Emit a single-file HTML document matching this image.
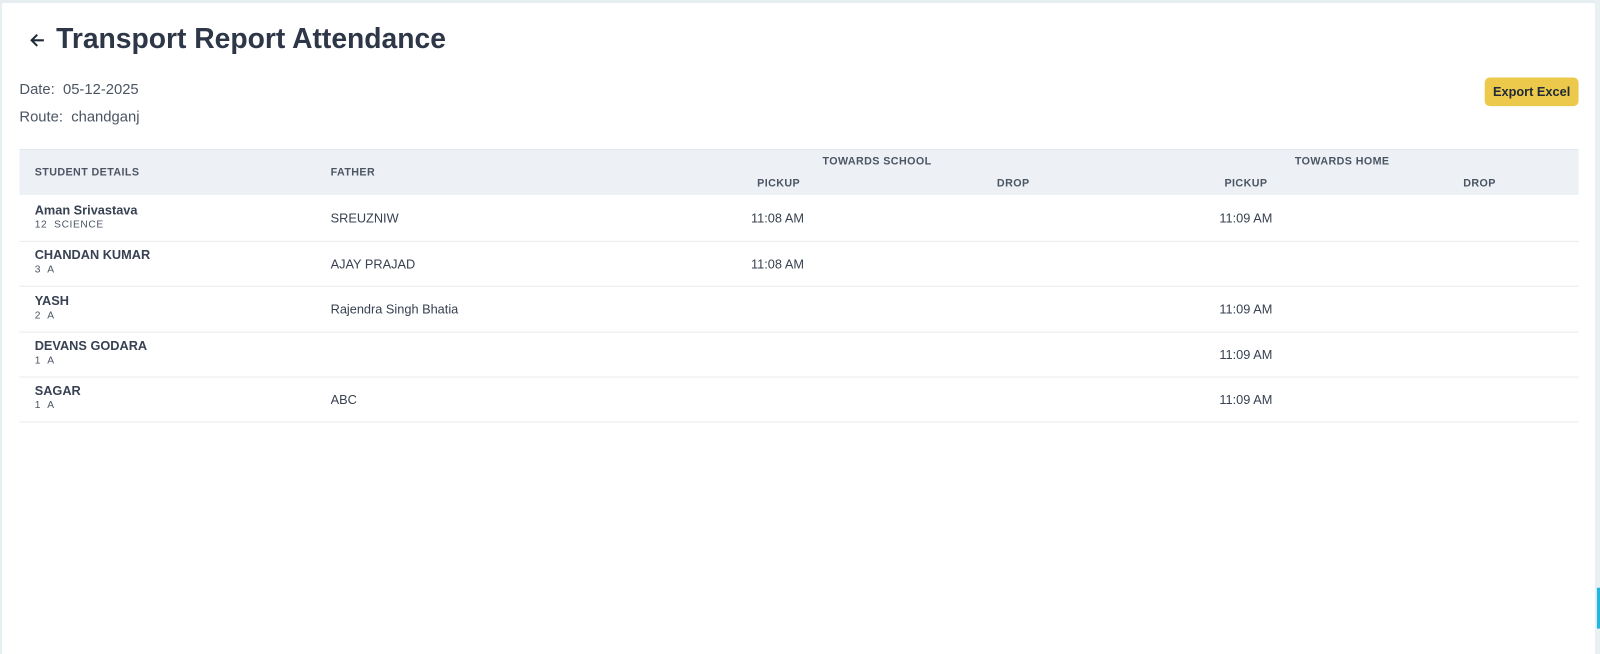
<!DOCTYPE html>
<html><head><meta charset="utf-8"><style>
*{margin:0;padding:0;box-sizing:border-box}
body{width:1600px;height:641px;background:#fff;font-family:"Liberation Sans",sans-serif;color:#374151;position:relative;overflow:hidden}
#w{position:absolute;left:0;top:0;width:1568px;height:628px;transform:scale(1.0204);transform-origin:0 0}
.a{position:absolute;white-space:nowrap}
.h{font-size:10.5px;font-weight:bold;color:#4b5563;letter-spacing:.4px}
.c{font-size:12.5px;color:#374151}
.n{font-size:12.5px;font-weight:bold;color:#374151}
.s{font-size:10px;color:#4b5563;letter-spacing:.6px}
.line{position:absolute;left:19px;width:1528px;height:1px;background:#e8ebef}
</style></head><body>
<div id="w">
<div class="a" style="left:0;top:0;width:1568px;height:3px;background:#e6eef2"></div>
<div class="a" style="left:0;top:0;width:2px;height:641px;background:#e6eef2"></div>
<div class="a" style="left:1563px;top:0;width:5px;height:641px;background:#e9f0f2"></div>
<div class="a" style="left:1565px;top:576px;width:3px;height:40px;background:#1fb6e0"></div>

<svg class="a" style="left:28px;top:31px" width="17" height="17" viewBox="0 0 17 17"><path d="M15 8.5H3M8.5 3L3 8.5L8.5 14" stroke="#1f2937" stroke-width="2" fill="none"/></svg>
<div class="a" style="left:55px;top:22px;font-size:27.7px;font-weight:bold;color:#2d3748">Transport Report Attendance</div>
<div class="a" style="left:19px;top:80px;font-size:14.5px;color:#4b5563">Date:&nbsp; 05-12-2025</div>
<div class="a" style="left:19px;top:107px;font-size:14.5px;color:#4b5563">Route:&nbsp; chandganj</div>
<div class="a" style="left:1455px;top:76px;width:92px;height:28px;background:#ecc94b;border-radius:5px;font-size:12.5px;font-weight:bold;color:#1f2937;text-align:center;line-height:28px">Export Excel</div>

<div class="a" style="left:19px;top:146px;width:1528px;height:45px;background:#edf1f5;border-top:1px solid #e2e8f0"></div>
<div class="a h" style="left:34px;top:163px">STUDENT DETAILS</div>
<div class="a h" style="left:324px;top:163px">FATHER</div>
<div class="a h" style="left:806px;top:152px">TOWARDS SCHOOL</div>
<div class="a h" style="left:742px;top:174px">PICKUP</div>
<div class="a h" style="left:977px;top:174px">DROP</div>
<div class="a h" style="left:1269px;top:152px">TOWARDS HOME</div>
<div class="a h" style="left:1200px;top:174px">PICKUP</div>
<div class="a h" style="left:1434px;top:174px">DROP</div>

<div class="a n" style="left:34px;top:199px">Aman Srivastava</div><div class="a s" style="left:34px;top:215px">12&nbsp; SCIENCE</div>
<div class="a c" style="left:324px;top:207px">SREUZNIW</div>
<div class="a c" style="left:736px;top:207px">11:08 AM</div>
<div class="a c" style="left:1195px;top:207px">11:09 AM</div>
<div class="line" style="top:236px"></div>

<div class="a n" style="left:34px;top:243px">CHANDAN KUMAR</div><div class="a s" style="left:34px;top:259px">3&nbsp; A</div>
<div class="a c" style="left:324px;top:252px">AJAY PRAJAD</div>
<div class="a c" style="left:736px;top:252px">11:08 AM</div>
<div class="line" style="top:280px"></div>

<div class="a n" style="left:34px;top:288px">YASH</div><div class="a s" style="left:34px;top:304px">2&nbsp; A</div>
<div class="a c" style="left:324px;top:296px">Rajendra Singh Bhatia</div>
<div class="a c" style="left:1195px;top:296px">11:09 AM</div>
<div class="line" style="top:325px"></div>

<div class="a n" style="left:34px;top:332px">DEVANS GODARA</div><div class="a s" style="left:34px;top:348px">1&nbsp; A</div>
<div class="a c" style="left:1195px;top:341px">11:09 AM</div>
<div class="line" style="top:369px"></div>

<div class="a n" style="left:34px;top:376px">SAGAR</div><div class="a s" style="left:34px;top:392px">1&nbsp; A</div>
<div class="a c" style="left:324px;top:385px">ABC</div>
<div class="a c" style="left:1195px;top:385px">11:09 AM</div>
<div class="line" style="top:413px"></div>
</div>
</body></html>
